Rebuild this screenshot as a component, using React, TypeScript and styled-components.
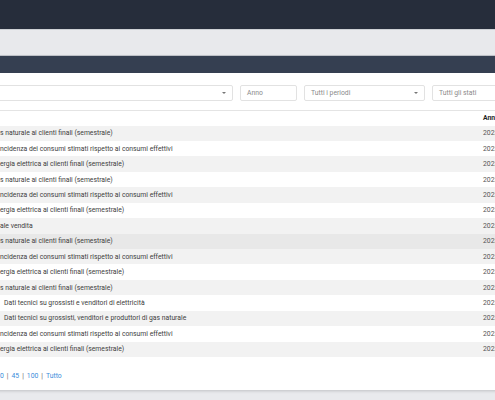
import React, { FunctionComponent } from "react";
import styled, { createGlobalStyle } from "styled-components";

const GlobalStyle = createGlobalStyle`
  html, body {
    margin: 0;
    padding: 0;
    background: #e9eaed;
    overflow: hidden;
    font-family: Roboto, "Liberation Sans", sans-serif;
  }
`;

const Page = styled.div`
  width: 495px;
  height: 400px;
  overflow: hidden;
  background: #e9eaed;
`;

const TopBar = styled.div`
  height: 29px;
  background: #262d3b;
`;

const SubBar = styled.div`
  height: 25px;
  background: #e8e9ec;
  border-top: 1px solid #cdd0d5;
  border-bottom: 1px solid #c3c6cc;
`;

const Panel = styled.div`
  margin-left: -10px;
  width: 560px;
  background: #ffffff;
  box-shadow: 0 1px 3px rgba(0, 0, 0, 0.18);
`;

const PanelHead = styled.div`
  height: 17px;
  background: #353f51;
`;

const Filters = styled.div`
  display: flex;
  gap: 7px;
  padding: 12px 0 0 0;
  height: 16px;
`;

const Field = styled.div<{ $w: number }>`
  position: relative;
  flex: 0 0 auto;
  box-sizing: border-box;
  width: ${(p) => p.$w}px;
  height: 16px;
  border: 1px solid #e2e2e2;
  border-radius: 2px;
  padding-left: 6px;
  display: flex;
  align-items: center;
  font-size: 6.8px;
  color: #8a8a8a;
`;

const Caret = styled.span`
  position: absolute;
  right: 6px;
  top: 6px;
  width: 0;
  height: 0;
  border-left: 2px solid transparent;
  border-right: 2px solid transparent;
  border-top: 2.5px solid #777;
`;

const Table = styled.div`
  margin-top: 9px;
  border-top: 1px solid #e4e4e4;
`;

const Row = styled.div<{ $bg: string; $head?: boolean }>`
  display: grid;
  grid-template-columns: 493px 1fr;
  height: ${(p) => (p.$head ? "14.6px" : "15.43px")};
  align-items: center;
  background: ${(p) => p.$bg};
  font-size: 6.8px;
  color: ${(p) => (p.$head ? "#1f1f1f" : "#404040")};
  font-weight: ${(p) => (p.$head ? 700 : 400)};
  white-space: nowrap;
`;

const Title = styled.span<{ $indent: number }>`
  padding-left: ${(p) => 10 + p.$indent}px;
  overflow: hidden;
`;

const Year = styled.span`
  color: #555;
`;

const Pager = styled.div`
  padding: 15px 0 10px 10px;
  font-size: 6.8px;
  color: #666;
  display: flex;
  gap: 3px;
  height: 8px;
  line-height: 8px;
`;

const PageLink = styled.span`
  color: #3b8ddb;
`;

const rows: [string, number][] = [
  ["s naturale ai clienti finali (semestrale)", 0],
  ["ncidenza dei consumi stimati rispetto ai consumi effettivi", 0],
  ["ergia elettrica ai clienti finali (semestrale)", 0],
  ["s naturale ai clienti finali (semestrale)", 0],
  ["ncidenza dei consumi stimati rispetto ai consumi effettivi", 0],
  ["ergia elettrica ai clienti finali (semestrale)", 0],
  ["ale vendita", 0],
  ["s naturale ai clienti finali (semestrale)", 0],
  ["ncidenza dei consumi stimati rispetto ai consumi effettivi", 0],
  ["ergia elettrica ai clienti finali (semestrale)", 0],
  ["s naturale ai clienti finali (semestrale)", 0],
  ["Dati tecnici su grossisti e venditori di elettricità", 1],
  ["Dati tecnici su grossisti, venditori e produttori di gas naturale", 1],
  ["ncidenza dei consumi stimati rispetto ai consumi effettivi", 0],
  ["ergia elettrica ai clienti finali (semestrale)", 0],
];

const rowBg = (i: number) => {
  if (i === 7) return "#e8e8e8";
  return i % 2 === 0 ? "#f2f2f2" : "#ffffff";
};

const App: FunctionComponent = () => {
  return (
    <Page>
      <GlobalStyle />
      <TopBar />
      <SubBar />
      <Panel>
        <PanelHead />
        <Filters>
          <Field $w={243}>
            <Caret />
          </Field>
          <Field $w={57}>Anno</Field>
          <Field $w={121}>
            Tutti i periodi
            <Caret />
          </Field>
          <Field $w={110}>Tutti gli stati</Field>
        </Filters>
        <Table>
          <Row $bg="#ffffff" $head>
            <span />
            <span>Anno</span>
          </Row>
          {rows.map(([t, indent], i) => (
            <Row key={i} $bg={rowBg(i)}>
              <Title $indent={indent * 4}>{t}</Title>
              <Year>2023</Year>
            </Row>
          ))}
        </Table>
        <Pager>
          <PageLink>0</PageLink>|<PageLink>45</PageLink>|<PageLink>100</PageLink>|
          <PageLink>Tutto</PageLink>
        </Pager>
      </Panel>
    </Page>
  );
};

export default App;
